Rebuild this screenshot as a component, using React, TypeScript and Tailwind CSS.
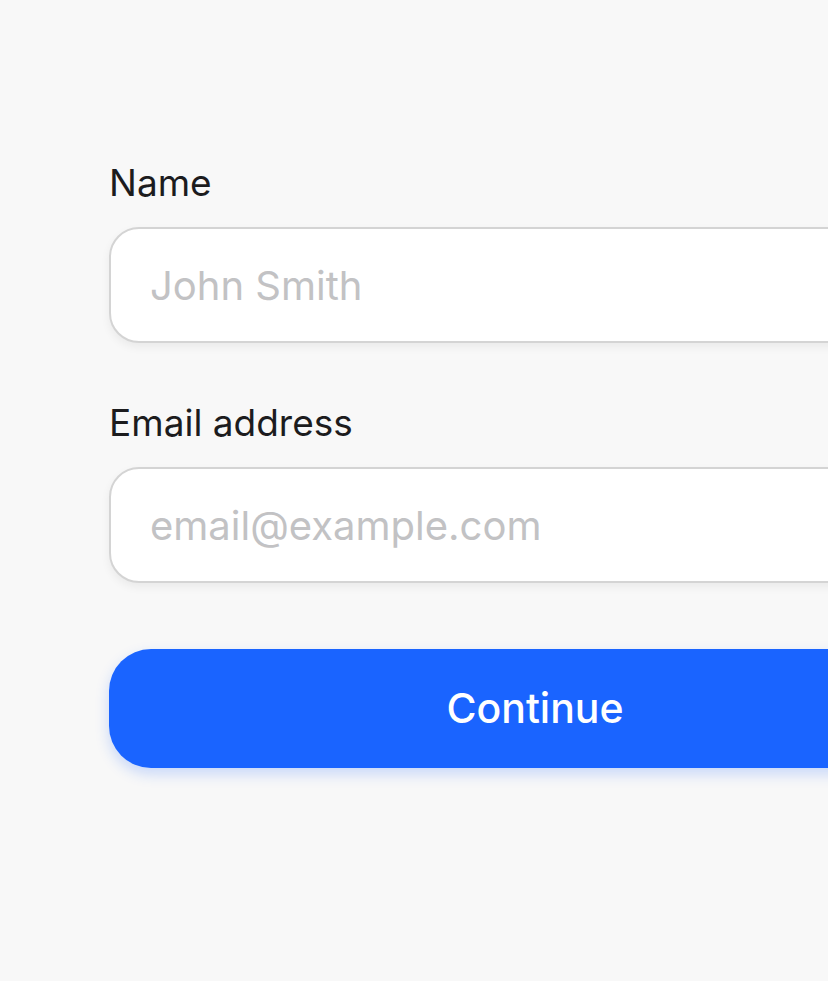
import React from 'react'

const font = { fontFamily: 'Inter, "Noto Sans", sans-serif' }

const Field = ({ label, placeholder, type = 'text' }: { label: string; placeholder: string; type?: string }) => (
  <div className='flex flex-col gap-[22px]'>
    <label className='text-[37px] leading-[44px] text-[#1c1c1e]'>{label}</label>
    <input
      type={type}
      placeholder={placeholder}
      className='h-[116px] w-full rounded-[30px] border-2 border-[#d4d4d4] bg-white pl-[39px] text-[40px] text-[#1c1c1e] placeholder:text-[#c2c2c4] shadow-[0_4px_10px_rgba(0,0,0,0.06)] outline-none'
    />
  </div>
)

export default function App() {
  return (
    <div className='min-h-[981px] w-full overflow-hidden bg-[#f8f8f8]' style={font}>
      <form className='flex w-[852px] flex-col pl-[109px] pt-[161px] box-content' onSubmit={(e) => e.preventDefault()}>
        <div className='flex flex-col gap-[58px]'>
          <Field label='Name' placeholder='John Smith' />
          <Field label='Email address' placeholder='email@example.com' type='email' />
        </div>
        <button
          type='submit'
          className='mt-[66px] h-[119px] w-full rounded-[42px] bg-[#1a64ff] text-[41px] font-medium text-white shadow-[0_6px_14px_rgba(26,100,255,0.22)]'
        >
          Continue
        </button>
      </form>
    </div>
  )
}
